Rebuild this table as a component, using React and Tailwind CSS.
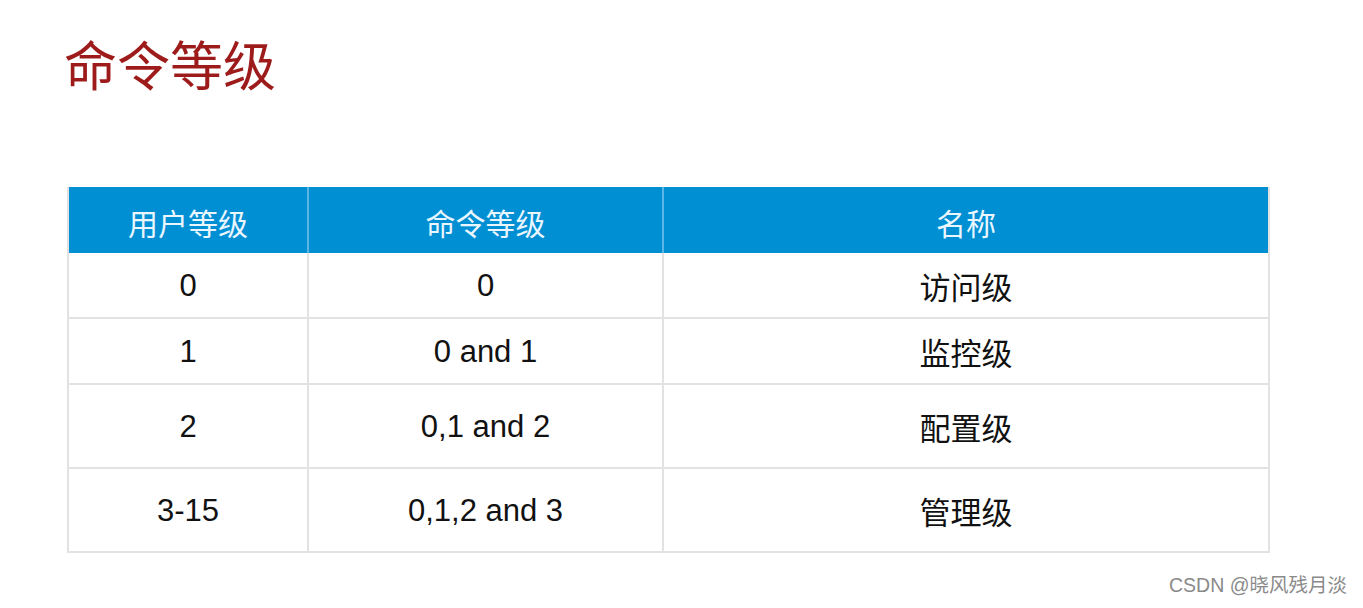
const rows = [
  { user: '0', cmd: '0', name: '访问级', h: 'h-[64px]' },
  { user: '1', cmd: '0 and 1', name: '监控级', h: 'h-[66px]' },
  { user: '2', cmd: '0,1 and 2', name: '配置级', h: 'h-[84px]' },
  { user: '3-15', cmd: '0,1,2 and 3', name: '管理级', h: 'h-[84px]' },
];

export default function App() {
  return (
    <div className="relative w-[1363px] h-[608px] bg-white overflow-hidden font-['Liberation_Sans','Noto_Sans_CJK_SC',sans-serif]">
      <h1 className="pl-[64px] pt-[30px] text-[53px] leading-[66px] text-[#9e1b1b] font-['Noto_Sans_CJK_SC',sans-serif] font-normal">
        命令等级
      </h1>

      <div className="ml-[67px] mt-[91px] w-[1203px] border-l-2 border-r-2 border-b-2 border-[#e2e2e2]">
        <div className="grid grid-cols-[240px_355px_604px] h-[66px] bg-[#008fd3] text-[#eaf6ff] text-[30px] font-['Noto_Sans_CJK_SC',sans-serif]">
          <div className="flex items-center justify-center pt-[5px] border-r-2 border-[#5cb6e4]">用户等级</div>
          <div className="flex items-center justify-center pt-[5px] border-r-2 border-[#5cb6e4]">命令等级</div>
          <div className="flex items-center justify-center pt-[5px]">名称</div>
        </div>
        {rows.map((r, i) => (
          <div
            key={r.user}
            className={`grid grid-cols-[240px_355px_604px] ${r.h} text-[31px] text-[#111] ${i > 0 ? 'border-t-2 border-[#e2e2e2]' : ''}`}
          >
            <div className="flex items-center justify-center pt-[3px] border-r-2 border-[#e2e2e2]">{r.user}</div>
            <div className="flex items-center justify-center pt-[3px] border-r-2 border-[#e2e2e2]">{r.cmd}</div>
            <div className="flex items-center justify-center pt-[2px] font-['Noto_Sans_CJK_SC',sans-serif]">{r.name}</div>
          </div>
        ))}
      </div>

      <div className="absolute right-[16px] bottom-[8px] text-[19.5px] text-[#8a8a8a]">
        CSDN @晓风残月淡
      </div>
    </div>
  );
}
